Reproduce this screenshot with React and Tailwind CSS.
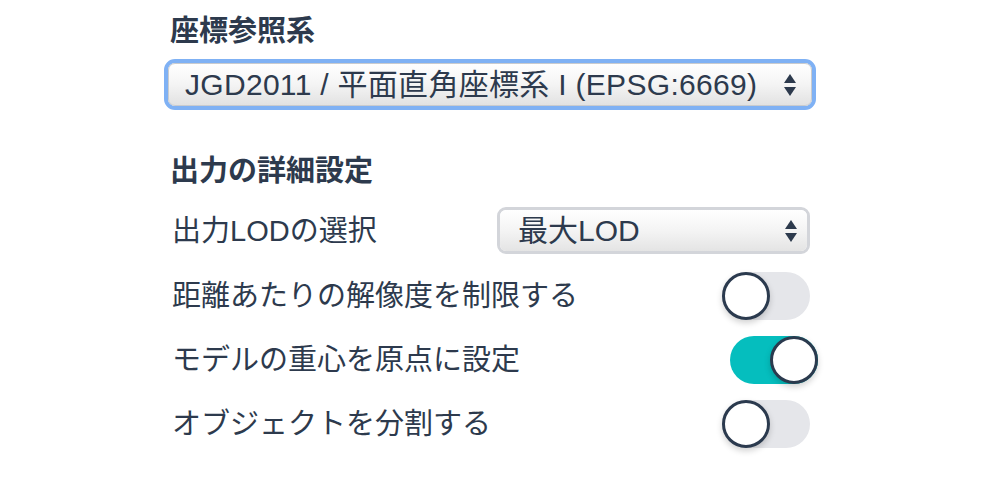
import React from "react";

const font = {
  fontFamily: '"Liberation Sans", "Noto Sans CJK JP", sans-serif',
};

function Arrows() {
  return (
    <svg width="14" height="24" viewBox="0 0 14 24" className="shrink-0">
      <path d="M7 1 L13 10 L1 10 Z" fill="#2d3a4d" />
      <path d="M1 14 L13 14 L7 23 Z" fill="#2d3a4d" />
    </svg>
  );
}

function Toggle({ on }) {
  return (
    <div
      className={
        "relative w-[88px] h-[48px] rounded-full " +
        (on ? "bg-[#05bebe] translate-x-2" : "bg-[#e5e6ea]")
      }
    >
      <div
        className={
          "absolute top-0 w-[48px] h-[48px] rounded-full bg-white border-[3px] border-[#2b3a4e] shadow-[0_3px_6px_rgba(0,0,0,0.18)] " +
          (on ? "right-0" : "left-0")
        }
      />
    </div>
  );
}

function Row({ label, children }) {
  return (
    <div className="flex items-center justify-between">
      <span className="pl-[8px] text-[29px] leading-[36px] text-[#2d3a4d]">{label}</span>
      {children}
    </div>
  );
}

export default function App() {
  return (
    <div className="w-[1006px] h-[484px] bg-white overflow-hidden" style={font}>
      <div className="ml-[164px] w-[652px] pt-[13px] flex flex-col">
        <h2 className="pl-[6px] text-[29px] leading-[36px] font-bold text-[#2d3a4d]">
          座標参照系
        </h2>
        <div className="mt-[10px] h-[51px] rounded-[11px] border-4 border-[#7fb1f4]">
          <div className="h-full rounded-[7px] border border-[#c9cbce] bg-gradient-to-b from-white via-[#f4f4f4] to-[#e2e2e2] flex items-center justify-between pl-[16px] pr-[14px]">
            <span className="text-[30px] tracking-[0.3px] leading-none text-[#2d3a4d]">
              JGD2011 / 平面直角座標系 I (EPSG:6669)
            </span>
            <Arrows />
          </div>
        </div>

        <h2 className="mt-[43px] pl-[6px] text-[29px] leading-[36px] font-bold text-[#2d3a4d]">
          出力の詳細設定
        </h2>

        <div className="mt-[18px] flex flex-col gap-[16px]">
          <Row label="出力LODの選択">
            <div className="mr-[6px] w-[313px] h-[47px] rounded-[9px] border-[3px] border-[#d3d5da]">
              <div className="h-full rounded-[6px] bg-gradient-to-b from-white via-[#f4f4f4] to-[#e4e4e4] flex items-center justify-between pl-[18px] pr-[9px]">
                <span className="text-[30px] leading-none text-[#2d3a4d]">最大LOD</span>
                <Arrows />
              </div>
            </div>
          </Row>
          <div className="mt-[2px] flex flex-col gap-[16px]">
            <Row label="距離あたりの解像度を制限する">
              <div className="mr-[6px]">
                <Toggle on={false} />
              </div>
            </Row>
            <Row label="モデルの重心を原点に設定">
              <div className="mr-[6px]">
                <Toggle on={true} />
              </div>
            </Row>
            <Row label="オブジェクトを分割する">
              <div className="mr-[6px]">
                <Toggle on={false} />
              </div>
            </Row>
          </div>
        </div>
      </div>
    </div>
  );
}
